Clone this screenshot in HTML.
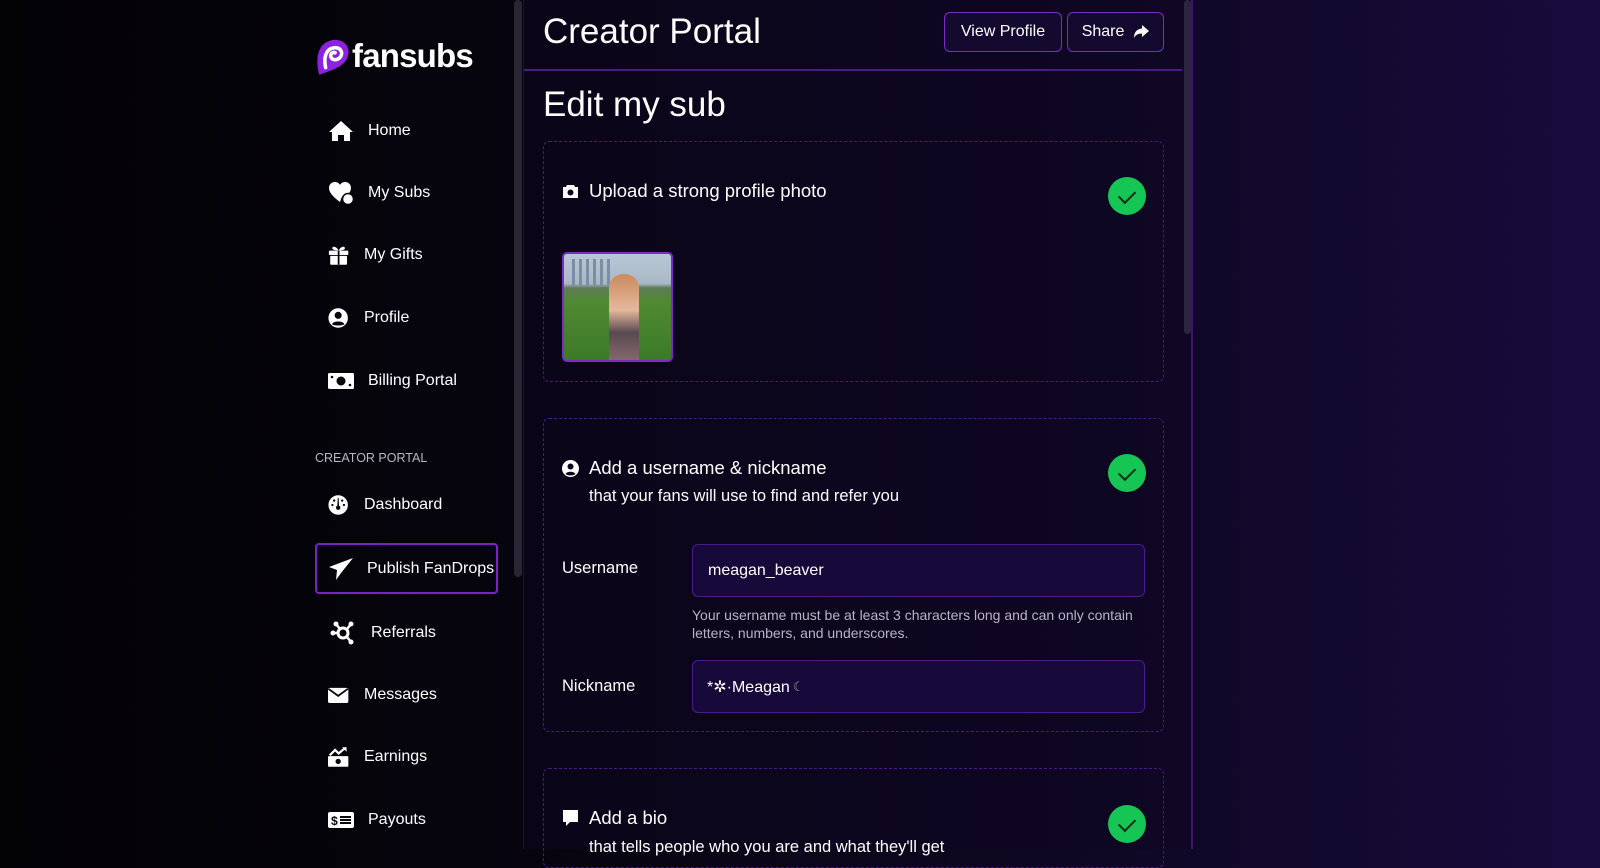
<!DOCTYPE html>
<html><head><meta charset="utf-8"><style>
*{box-sizing:border-box;margin:0;padding:0}
body{width:1600px;height:849px;overflow:hidden;font-family:"Liberation Sans",sans-serif;color:#fff;
background:linear-gradient(90deg,#030205 0%,#06040d 30%,#0b0619 50%,#100828 75%,#170b3c 100%);position:relative}
.a{position:absolute}
.nav{position:absolute;left:328px;display:flex;align-items:center;font-size:16px;transform:translateY(-50%)}
.nav svg{width:26px;height:24px;margin-right:13px;fill:#fff}
.card{position:absolute;left:543px;width:621px;border:1px dashed #4b1a86;border-radius:6px}
.chk{position:absolute;width:38px;height:38px;border-radius:50%;background:#16c654;left:1108px}
.chk:after{content:"";position:absolute;left:14px;top:10px;width:8px;height:14px;border:solid #102a18;border-width:0 2px 2px 0;transform:rotate(45deg)}
.h{position:absolute;font-size:18.5px;transform:translateY(-50%);display:flex;align-items:center}
.inp{position:absolute;left:692px;width:453px;height:53px;border:1px solid #4a1c8a;border-radius:6px;background:#170a3a;font-size:16px;padding-left:15px;display:flex;align-items:center}
.btn{position:absolute;top:12px;height:40px;border:1.5px solid #7a2cc4;border-radius:6px;background:#140a30;font-size:16px;display:flex;align-items:center;justify-content:center}
</style></head><body>
<div class="a" style="left:523px;top:0;width:670px;height:849px;background:linear-gradient(90deg,#0a0518,#0f0724);border-left:1px solid #1f1233;border-right:2px solid #3d1470"></div>
<div class="a" style="left:514px;top:0;width:8px;height:577px;background:#2a2535;border-radius:4px"></div>
<div class="a" style="left:1184px;top:0;width:7px;height:334px;background:#2b2540;border-radius:4px"></div>
<div class="a" style="left:524px;top:69px;width:658px;height:2px;background:#4b1a86"></div>

<svg class="a" style="left:314px;top:38px" width="38" height="39" viewBox="0 0 36 37"><path d="M5 35 C1 20 3 5 17 2 C31 0 36 12 31 20 C26 29 14 31 5 35Z" fill="#8a22e0"/><path d="M11 28 C9 19 11 11 18 9.5 C25 8 28 14 25 18 C22 22 17 21 16 18 C15 15 18 13 20 14" fill="none" stroke="#fff" stroke-width="3.4" stroke-linecap="round"/></svg>
<div class="a" style="left:352px;top:37px;font-size:33px;font-weight:bold;letter-spacing:-0.8px">fansubs</div>

<div class="nav" style="top:131px"><svg viewBox="0 0 26 24"><path d="M13 2 L25 13 H22 V22 H16 V16 H10 V22 H4 V13 H1Z"/></svg><span style="margin-left:1px">Home</span></div>
<div class="nav" style="top:193px"><svg viewBox="0 0 26 24"><path d="M12 21 C4 15 1 11 1 7 C1 3 4 1 7 1 C9 1 11 2 12 4 C13 2 15 1 17 1 C20 1 23 3 23 7 C23 9 22 11 21 12 C18 12 14 14 13 18Z"/><circle cx="20" cy="18" r="5.5" stroke="#08050f" stroke-width="1.5"/></svg><span style="margin-left:1px">My Subs</span></div>
<div class="nav" style="top:255px"><svg viewBox="0 0 26 24" style="width:23px"><rect x="1" y="7" width="22" height="5" rx="1"/><rect x="2.5" y="13" width="19" height="10" rx="1"/><rect x="11" y="7" width="2" height="16" fill="#08050f"/><path d="M12 7 C9 1 4 2 5 5 C6 7 12 7 12 7 C12 7 18 7 19 5 C20 2 15 1 12 7Z"/></svg><span>My Gifts</span></div>
<div class="nav" style="top:318px"><svg viewBox="0 0 26 24" style="width:23px"><circle cx="11.5" cy="12" r="11"/><circle cx="11.5" cy="9" r="4" fill="#08050f"/><path d="M4.5 19 C6 15 17 15 18.5 19 C16 21 7 21 4.5 19Z" fill="#08050f"/></svg><span>Profile</span></div>
<div class="nav" style="top:381px"><svg viewBox="0 0 26 24"><rect x="0" y="4" width="26" height="16" rx="1.5"/><circle cx="13" cy="12" r="4.5" fill="#08050f"/><circle cx="4" cy="8" r="1.3" fill="#08050f"/><circle cx="22" cy="16" r="1.3" fill="#08050f"/></svg><span style="margin-left:1px">Billing Portal</span></div>

<div class="a" style="left:315px;top:451px;font-size:12.5px;color:#bbb6c4">CREATOR PORTAL</div>
<div class="nav" style="top:505px"><svg viewBox="0 0 26 24" style="width:23px"><circle cx="11.5" cy="12" r="11"/><path d="M10.5 13 L11 4 H12 L12.5 13Z" fill="#08050f"/><circle cx="11.5" cy="15" r="2.5" fill="#08050f"/><circle cx="5" cy="12" r="1.3" fill="#08050f"/><circle cx="18" cy="12" r="1.3" fill="#08050f"/><circle cx="7" cy="7" r="1.3" fill="#08050f"/><circle cx="16" cy="7" r="1.3" fill="#08050f"/></svg><span>Dashboard</span></div>
<div class="a" style="left:315px;top:543px;width:183px;height:51px;border:2px solid #7a22c4;border-radius:4px"></div>
<div class="nav" style="top:569px"><svg viewBox="0 0 26 24"><path d="M25 1 L1 10 L9 13 L8 23 L13 16 Z"/></svg><span>Publish FanDrops</span></div>
<div class="nav" style="top:633px"><svg viewBox="0 0 26 24" style="width:30px"><circle cx="13" cy="12" r="5" fill="none" stroke="#fff" stroke-width="3"/><circle cx="3" cy="12" r="2.5"/><circle cx="21" cy="3" r="2.5"/><circle cx="21" cy="21" r="2.5"/><circle cx="6" cy="3" r="2.5"/><path d="M3 12H8M17 8L21 3M17 16L21 21M6 3L10 8" stroke="#fff" stroke-width="2.5"/></svg><span>Referrals</span></div>
<div class="nav" style="top:695px"><svg viewBox="0 0 26 24" style="width:23px"><rect x="0" y="4" width="23" height="17" rx="2"/><path d="M0.5 5 L11.5 13 L22.5 5" fill="none" stroke="#08050f" stroke-width="2"/></svg><span>Messages</span></div>
<div class="nav" style="top:757px"><svg viewBox="0 0 26 24" style="width:23px"><rect x="0" y="11" width="23" height="12" rx="1"/><circle cx="11.5" cy="17" r="3" fill="#08050f"/><path d="M2 10 L8 4 L12 8 L19 2" fill="none" stroke="#fff" stroke-width="2.5"/><path d="M16 1 H21 V6Z"/></svg><span>Earnings</span></div>
<div class="nav" style="top:820px"><svg viewBox="0 0 26 24"><rect x="0" y="4" width="26" height="16" rx="2"/><text x="3" y="17" font-size="12" font-weight="bold" fill="#08050f" font-family="Liberation Sans">$</text><path d="M12 9H23M12 12H23M12 15H23" stroke="#08050f" stroke-width="2"/></svg><span style="margin-left:1px">Payouts</span></div>

<div class="a" style="left:543px;top:12px;font-size:35px">Creator Portal</div>
<div class="btn" style="left:944px;width:118px">View Profile</div>
<div class="btn" style="left:1067px;width:97px">Share&nbsp;&nbsp;<svg width="16" height="14" viewBox="0 0 16 14"><path d="M9 0 L16 6 L9 12 V8.5 C5 8.5 2.5 10 1 13 C1 7 4 4 9 3.5Z" fill="#fff"/></svg></div>
<div class="a" style="left:543px;top:85px;font-size:35px">Edit my sub</div>

<div class="card" style="top:141px;height:241px"></div>
<div class="h" style="left:562px;top:191px"><svg width="17" height="15" viewBox="0 0 17 15" style="margin-right:10px"><path d="M5 1H12L13 3H16V14H1V3H4Z" fill="#fff"/><circle cx="8.5" cy="8.5" r="3" fill="#0a0518"/></svg>Upload a strong profile photo</div>
<div class="chk" style="top:177px"></div>
<div class="a" style="left:562px;top:252px;width:111px;height:110px;border:2px solid #7a2cc4;border-radius:5px;overflow:hidden;background:linear-gradient(180deg,#b8c7d6 0%,#aab8c6 28%,#5d7b55 32%,#4f8a32 45%,#3d7a28 100%)">
<div class="a" style="left:8px;top:5px;width:40px;height:28px;background:repeating-linear-gradient(90deg,#7b8ea4 0 3px,transparent 3px 7px)"></div>
<div class="a" style="left:45px;top:20px;width:30px;height:90px;background:linear-gradient(180deg,#c98a5e 0%,#e6b79c 40%,#5a4a52 65%,#8a6c70 100%);border-radius:14px 14px 4px 4px"></div>
</div>

<div class="card" style="top:418px;height:314px"></div>
<div class="h" style="left:562px;top:468px"><svg width="17" height="17" viewBox="0 0 17 17" style="margin-right:10px"><circle cx="8.5" cy="8.5" r="8.5" fill="#fff"/><circle cx="8.5" cy="6.5" r="3" fill="#0a0518"/><path d="M3.5 14C5 11 12 11 13.5 14C11 16 6 16 3.5 14Z" fill="#0a0518"/></svg>Add a username &amp; nickname</div>
<div class="a" style="left:589px;top:487px;font-size:16.5px">that your fans will use to find and refer you</div>
<div class="chk" style="top:454px"></div>
<div class="a" style="left:562px;top:559px;font-size:16.5px">Username</div>
<div class="inp" style="top:544px">meagan_beaver</div>
<div class="a" style="left:692px;top:607px;font-size:14px;color:#b9b4c4;line-height:17.5px">Your username must be at least 3 characters long and can only contain<br>letters, numbers, and underscores.</div>
<div class="a" style="left:562px;top:677px;font-size:16.5px">Nickname</div>
<div class="inp" style="top:660px;padding-left:14px">*✲·Meagan <span style="color:#999;font-size:13px;margin-left:3px">☾</span></div>

<div class="card" style="top:768px;height:100px"></div>
<div class="h" style="left:562px;top:818px"><svg width="17" height="18" viewBox="0 0 17 18" style="margin-right:10px"><path d="M1 1H16V13H8L4 17V13H1Z" fill="#fff"/></svg>Add a bio</div>
<div class="a" style="left:589px;top:838px;font-size:16.5px">that tells people who you are and what they'll get</div>
<div class="chk" style="top:805px"></div>
</body></html>
